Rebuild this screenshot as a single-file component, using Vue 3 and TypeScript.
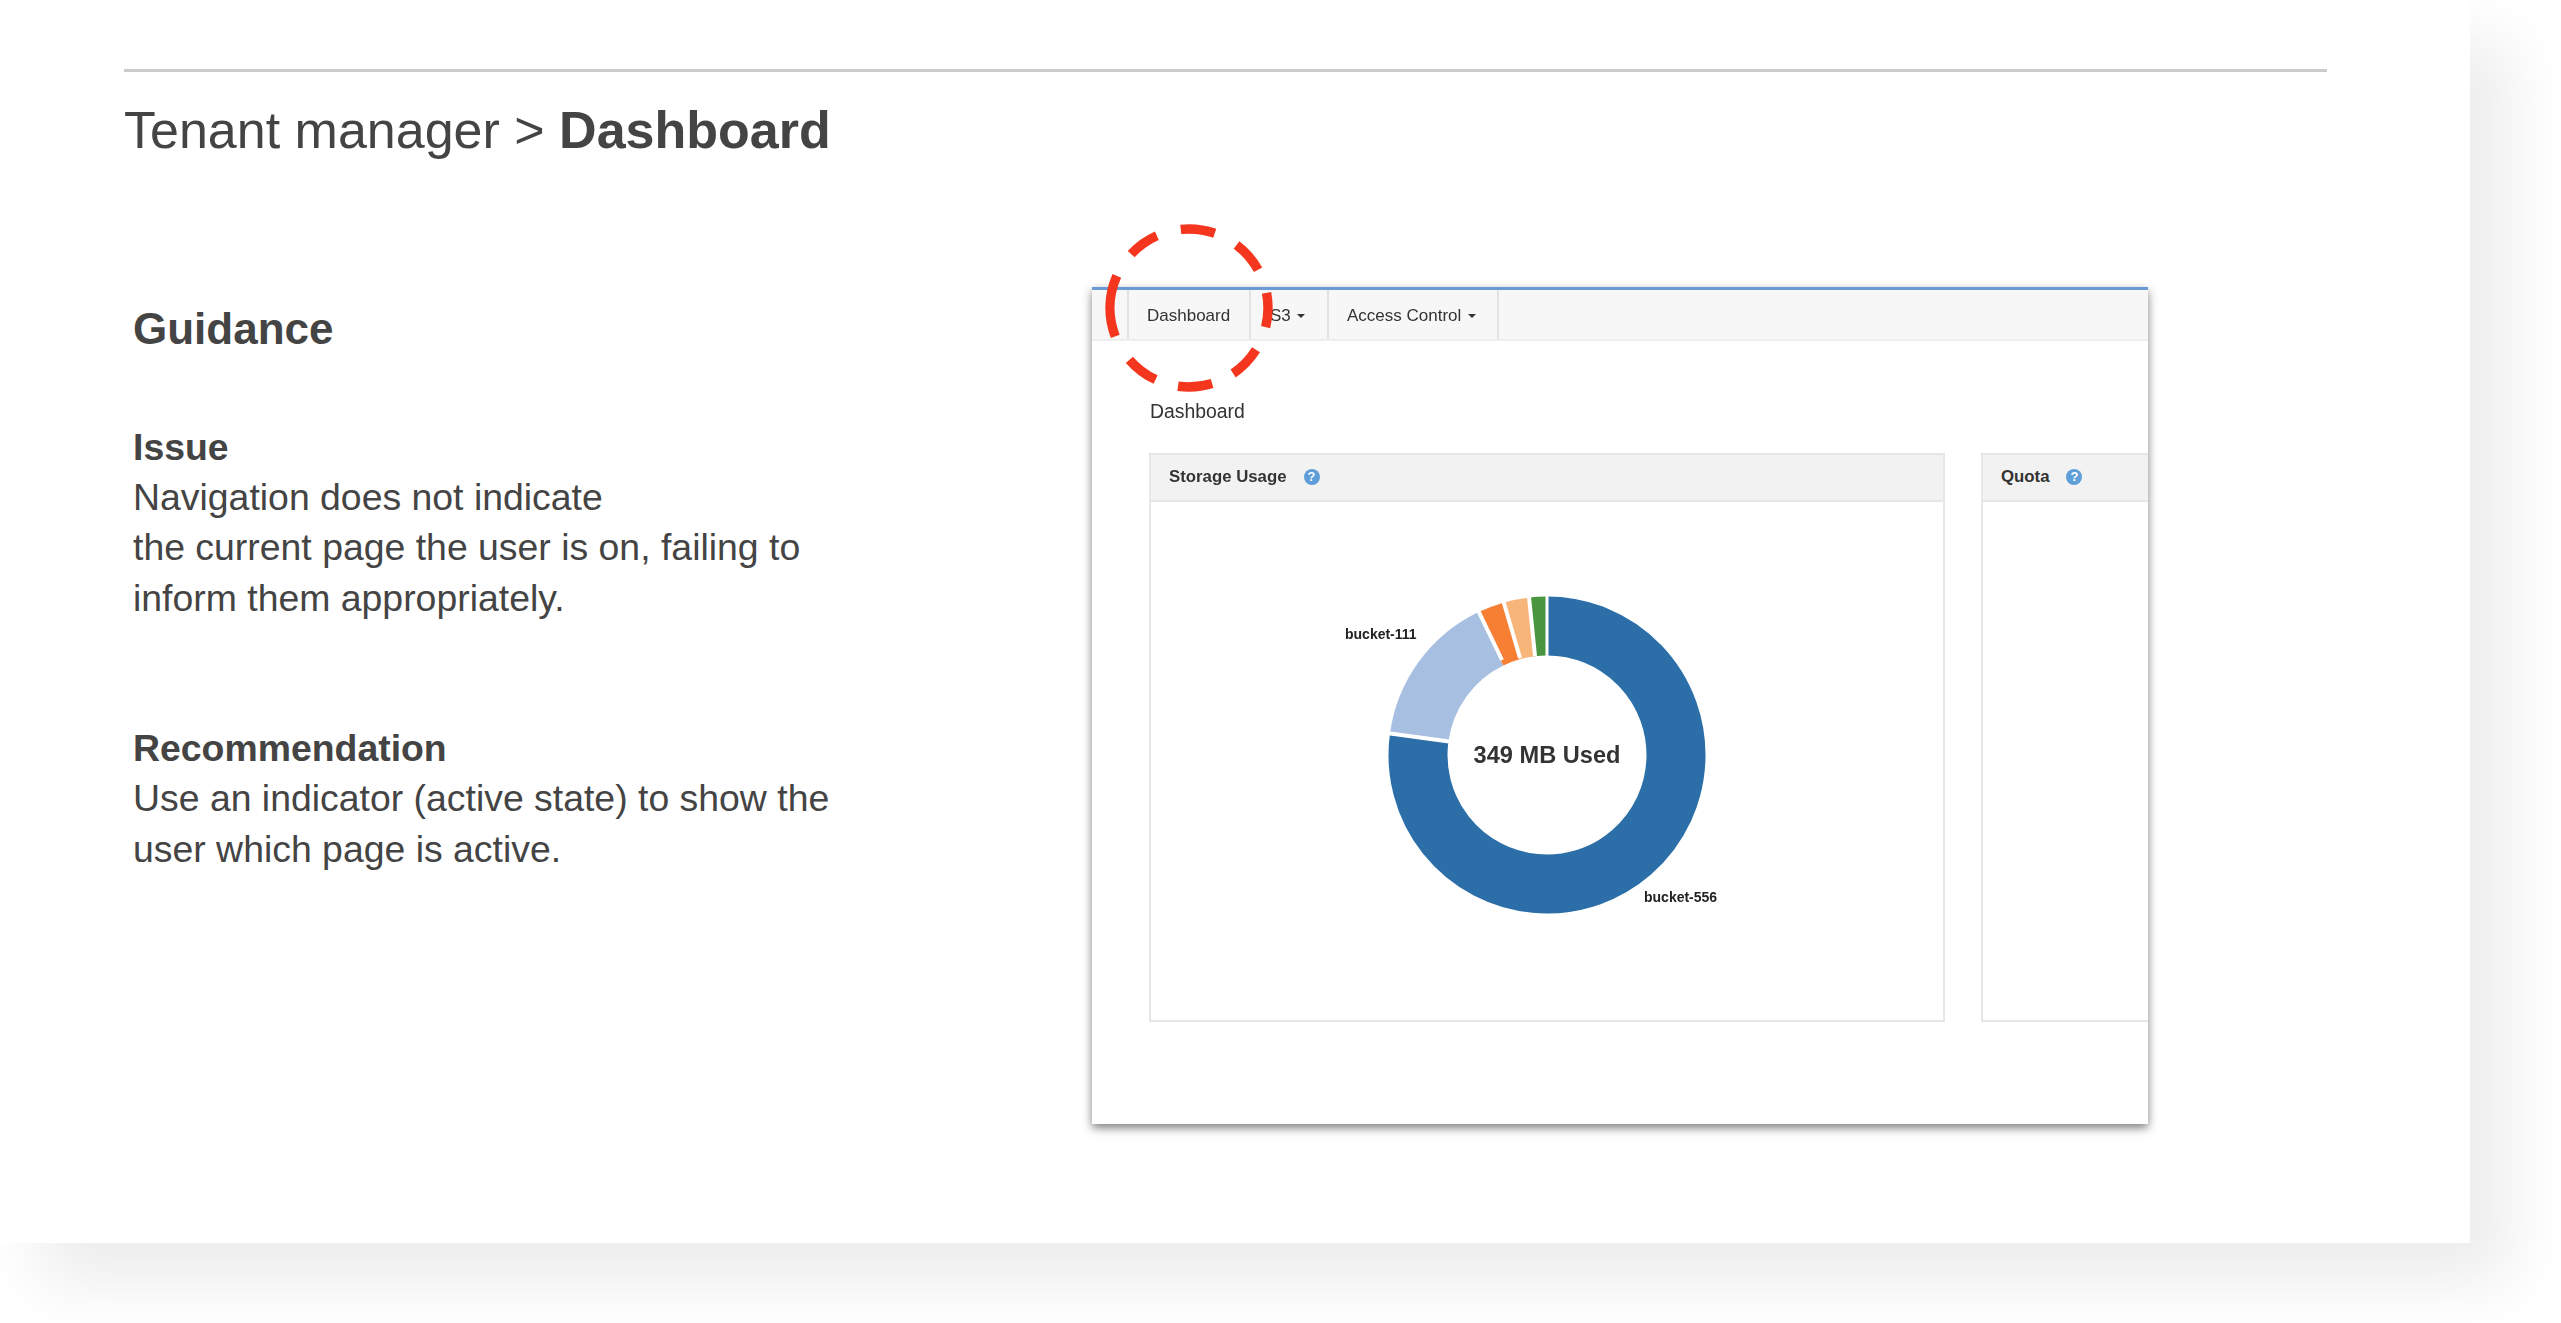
<script setup lang="ts">
function arc(x: number, y: number, rad: number, a0: number, a1: number): string {
  const p = (a: number) => {
    const t = (a * Math.PI) / 180
    return `${(x + rad * Math.sin(t)).toFixed(2)} ${(y - rad * Math.cos(t)).toFixed(2)}`
  }
  return `M${p(a0)} A${rad} ${rad} 0 ${a1 - a0 > 180 ? 1 : 0} 1 ${p(a1)}`
}
const dashes = [
  [-6, 19], [37, 61], [79, 104], [122, 146], [163, 188], [205, 229], [249, 294], [313, 336],
].map(([a, b]) => arc(84, 84, 79, a, b))

const slices = [
  { from: 0, to: 278, color: '#2c6ea8' },
  { from: 278, to: 334, color: '#a7c0e2' },
  { from: 334, to: 344, color: '#f77f33' },
  { from: 344, to: 353, color: '#f7b57a' },
  { from: 353, to: 360, color: '#4a9640' },
].map((s) => ({ color: s.color, d: arc(205, 175, 129, s.from, s.to - 0.01) }))
</script>

<template>
  <div class="page">
    <div class="slide">
      <div class="rule"></div>
      <h1 class="title">Tenant manager &gt; <b>Dashboard</b></h1>
      <div class="content">
        <section class="guide">
          <h2>Guidance</h2>
          <h3 class="issue">Issue</h3>
          <p>Navigation does not indicate<br />the current page the user is on, failing to<br />inform them appropriately.</p>
          <h3 class="rec">Recommendation</h3>
          <p>Use an indicator (active state) to show the<br />user which page is active.</p>
        </section>

        <div class="shot-wrap">
          <div class="shot">
            <div class="shot-inner">
              <nav class="nav">
                <a class="tab first">Dashboard</a>
                <a class="tab s3">S3 <i class="caret"></i></a>
                <a class="tab access">Access Control <i class="caret"></i></a>
              </nav>
              <div class="page-title">Dashboard</div>
              <div class="panels">
                <div class="panel storage">
                  <div class="panel-head">
                    <span>Storage Usage</span>
                    <i class="help">?</i>
                  </div>
                  <div class="panel-body">
                    <svg class="donut" width="410" height="350" viewBox="0 0 410 350">
                      <path
                        v-for="s in slices"
                        :key="s.color"
                        :d="s.d"
                        fill="none"
                        :stroke="s.color"
                        stroke-width="59"
                      />
                      <line x1="205" y1="15" x2="205" y2="76" stroke="#fff" stroke-width="3" />
                      <line x1="46.4" y1="153.2" x2="107" y2="161.5" stroke="#fff" stroke-width="4" />
                      <line x1="134" y1="26" x2="160" y2="80" stroke="#fff" stroke-width="4" />
                      <line x1="161" y1="20" x2="178" y2="78" stroke="#fff" stroke-width="4" />
                      <line x1="187" y1="17" x2="193" y2="76" stroke="#fff" stroke-width="4" />
                      <text x="205" y="183" text-anchor="middle" class="used">349 MB Used</text>
                      <text x="3" y="58.5" class="lbl">bucket-111</text>
                      <text x="302" y="321.5" class="lbl">bucket-556</text>
                    </svg>
                  </div>
                </div>
                <div class="panel quota">
                  <div class="panel-head">
                    <span>Quota</span>
                    <i class="help">?</i>
                  </div>
                </div>
              </div>
            </div>
          </div>
          <svg class="ring" width="168" height="168" viewBox="0 0 168 168">
            <path v-for="d in dashes" :key="d" :d="d" fill="none" stroke="#f5361e" stroke-width="9.4" />
          </svg>
        </div>
      </div>
    </div>
  </div>
</template>

<style>
body { margin: 0; background: #fff; }
</style>

<style scoped>
.page {
  width: 2561px;
  height: 1323px;
  overflow: hidden;
  background: #fff;
}
.slide {
  width: 2470px;
  height: 1243px;
  box-sizing: border-box;
  padding: 69px 143px 0 124px;
  background: #fff;
  box-shadow: 40px 40px 60px rgba(0, 0, 0, 0.075);
  font-family: "Liberation Sans", Arial, sans-serif;
  color: #444;
}
.rule { height: 3px; background: #ccc; }
.title {
  margin: 28px 0 0;
  font-size: 52px;
  line-height: 60px;
  font-weight: 400;
  color: #444;
}
.title b { font-weight: 700; }
.content { display: flex; margin-top: 127px; }
.guide { width: 968px; padding-left: 9px; flex: none; box-sizing: border-box; }
.guide h2 {
  margin: 17px 0 0;
  font-size: 44px;
  line-height: 50px;
  font-weight: 700;
}
.guide h3 {
  margin: 0;
  font-size: 37.4px;
  line-height: 50px;
  font-weight: 700;
}
.guide .issue { margin-top: 68px; }
.guide .rec { margin-top: 100px; }
.guide p {
  margin: 0;
  font-size: 37.4px;
  line-height: 50.4px;
}
.shot-wrap { position: relative; width: 1056px; height: 837px; flex: none; }
.shot {
  width: 100%;
  height: 100%;
  overflow: hidden;
  background: #fff;
  box-shadow: 0 4px 9px rgba(0, 0, 0, 0.5);
}
.shot-inner { filter: blur(0.6px); height: 100%; }
.nav {
  display: flex;
  height: 49px;
  padding-left: 35px;
  background: #f7f7f7;
  border-top: 3px solid #6a9ad6;
  border-bottom: 2px solid #eee;
  color: #333;
  font-size: 17px;
}
.tab {
  display: flex;
  align-items: center;
  box-sizing: border-box;
  border-left: 2px solid #e2e2e2;
  padding-left: 18px;
  padding-top: 2px;
}
.first { width: 122px; }
.s3 { width: 78px; padding-left: 19px; gap: 6px; }
.access { padding-left: 18px; gap: 7px; border-right: 2px solid #e2e2e2; box-sizing: content-box; width: 150px; }
.caret {
  display: inline-block;
  width: 0;
  height: 0;
  border-left: 4.5px solid transparent;
  border-right: 4.5px solid transparent;
  border-top: 4.5px solid #333;
}
.page-title {
  margin: 58px 0 0 58px;
  font-size: 19.4px;
  line-height: 24px;
  color: #333;
}
.panels { display: flex; gap: 36px; margin: 30px 0 0 57px; }
.panel {
  box-sizing: border-box;
  height: 569px;
  border: 2px solid #e6e6e6;
  flex: none;
}
.storage { width: 796px; }
.quota { width: 300px; }
.panel-head {
  display: flex;
  align-items: center;
  gap: 17px;
  height: 47px;
  box-sizing: border-box;
  padding: 0 0 2px 18px;
  background: #f2f2f2;
  border-bottom: 2px solid #e6e6e6;
  font-size: 16.8px;
  font-weight: 700;
  color: #333;
}
.help {
  width: 16px;
  height: 16px;
  border-radius: 50%;
  background: #5f9ed8;
  color: #fff;
  font-size: 13px;
  line-height: 16px;
  text-align: center;
  font-style: normal;
  font-weight: 700;
}
.panel-body { display: flex; justify-content: center; padding-top: 78px; }
.donut { display: block; }
.used { font-size: 23.6px; font-weight: 700; fill: #333; }
.lbl { font-size: 14px; font-weight: 700; fill: #222; }
.ring { position: absolute; left: 13px; top: -63.5px; }
</style>
